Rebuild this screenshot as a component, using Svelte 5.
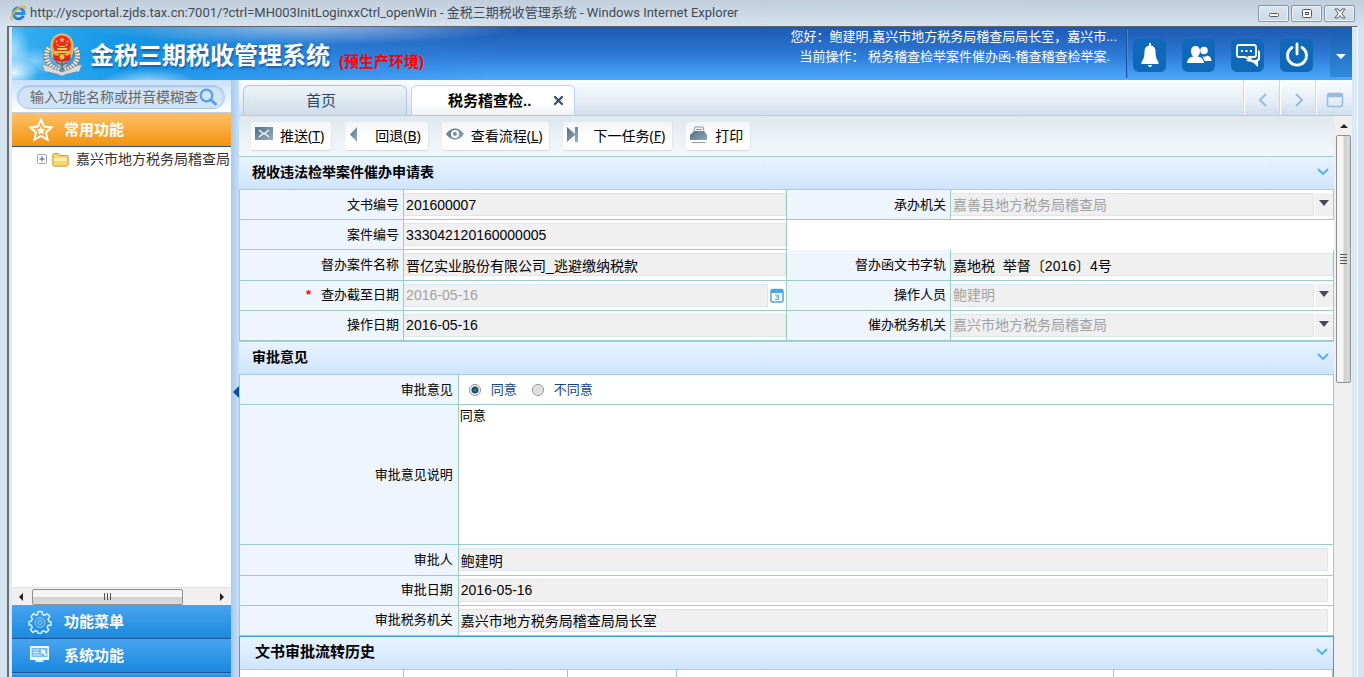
<script lang="ts">
  interface Tool {
    icon: string;
    label: string;
    key?: string;
  }

  const tools: Tool[] = [
    { icon: 'mail', label: '推送', key: 'T' },
    { icon: 'back', label: '回退', key: 'B' },
    { icon: 'eye', label: '查看流程', key: 'L' },
    { icon: 'next', label: '下一任务', key: 'F' },
    { icon: 'print', label: '打印' }
  ];

  const quickLinks = ['消息提醒', '联系人', '在线交流', '退出'];

  let keyword = $state('输入功能名称或拼音模糊查询');
  let opinion = $state('agree');
  let remark = $state('同意');
</script>

{#snippet chevron()}
  <svg width="12" height="8" viewBox="0 0 12 8" fill="none" stroke="#4fb0f2" stroke-width="1.800" aria-hidden="true">
    <path d="M1 1l5 5 5-5" />
  </svg>
{/snippet}

{#snippet heading(text: string)}
  <header class="section-head">
    <h2>{text}</h2>
    <button type="button" aria-label="折叠 {text}">{@render chevron()}</button>
  </header>
{/snippet}

{#snippet picker(id: string, value: string)}
  <div class="picker">
    <select {id} disabled><option>{value}</option></select>
    <span class="arrow"></span>
  </div>
{/snippet}

<div class="window">
  <div class="titlebar">
    <svg width="17" height="17" viewBox="0 0 17 17" fill="none" aria-hidden="true">
      <path d="M13.4 10.8a5.4 5.4 0 1 1 .6-2.4H5" stroke="#2b8fdc" stroke-width="3" />
      <path d="M13 11a5 5 0 0 1-8.500 1.500" stroke="#1567b5" stroke-width="1" />
      <path d="M2.500 15.500C-.5 14 3 6.500 8.500 3.200c4-2.400 7.300-2.300 6.800.8" stroke="#f0b429" stroke-width="1.600" />
    </svg>
    <span class="caption">http://yscportal.zjds.tax.cn:7001/?ctrl=MH003InitLoginxxCtrl_openWin - 金税三期税收管理系统 - Windows Internet Explorer</span>
    <div class="window-buttons">
      <button type="button" aria-label="最小化">
        <svg width="12" height="11" viewBox="0 0 12 11"><rect x="1.500" y="5.500" width="9" height="3" rx="1" fill="#fff" stroke="#4d5866" /></svg>
      </button>
      <button type="button" aria-label="最大化">
        <svg width="12" height="11" viewBox="0 0 12 11" fill="#fff" stroke="#4d5866"><rect x="1.500" y="1.500" width="9" height="8" rx="1" /><rect x="4.500" y="4.500" width="3" height="2" /></svg>
      </button>
      <button type="button" aria-label="关闭">
        <svg width="12" height="11" viewBox="0 0 12 11"><path d="M1 1h3l2 2.500L8 1h3L7.800 5.500 11 10H8L6 7.500 4 10H1l3.200-4.500z" fill="#fff" stroke="#4d5866" /></svg>
      </button>
    </div>
  </div>

  <div class="page">
    <header class="banner">
      <svg class="emblem" width="42" height="44" viewBox="0 0 42 44" aria-hidden="true">
        <g fill="none" stroke="#66737c" stroke-width="6">
          <path d="M8 15c-6 8-1 19 11 23" />
          <path d="M34 15c6 8 1 19-11 23" />
        </g>
        <g fill="none" stroke="#e6e4dc" stroke-width="5" stroke-dasharray="2 1">
          <path d="M8 15c-6 8-1 19 11 23" />
          <path d="M34 15c6 8 1 19-11 23" />
        </g>
        <path d="M14 25l3 10h8l3-10z" fill="#a9afb0" />
        <path d="M21 27v9M15 29l6 3 6-3" stroke="#5f696e" stroke-width="1.500" fill="none" />
        <path d="M1 32c6-1 9 4 15 5l5 2 5-2c6-1 9-6 15-5l-3 7c-4-1-8 2-12 2l-5 2-5-2c-4 0-8-3-12-2z" fill="#dcdad4" stroke="#7d868a" stroke-width=".6" />
        <path d="M10 13c0-8 5-12 11-12s11 4 11 12c0 4-1 8-2 11-5 3-13 3-18 0-1-3-2-7-2-11z" fill="#e8a93c" stroke="#f0c987" />
        <ellipse cx="21" cy="12" rx="9" ry="9.500" fill="#ea2b26" />
        <path d="M14 18h14l1 2H13zM16 15h10v2H16zM18 13h6v1h-6z" fill="#f7cf4a" />
        <path d="M21 4l.8 1.900h2.100l-1.700 1.300.6 2.100-1.800-1.200-1.800 1.200.6-2.100-1.700-1.300h2.100z" fill="#fbd94c" />
        <g fill="#fbd94c"><circle cx="15.500" cy="8.500" r=".9" /><circle cx="26.500" cy="8.500" r=".9" /><circle cx="16.500" cy="12" r=".9" /><circle cx="25.500" cy="12" r=".9" /></g>
        <path d="M12 21c3 2 5 2 6 1h6c1 1 3 1 6-1l-1 6c-4 2-12 2-16 0z" fill="#e0251f" />
        <circle cx="21" cy="24" r="2.500" fill="#f2c23c" />
      </svg>
      <h1>金税三期税收管理系统</h1>
      <strong class="env">(预生产环境)</strong>
      <div class="user">
        <p>您好：鲍建明,嘉兴市地方税务局稽查局局长室，嘉兴市...</p>
        <p class="current">当前操作： 税务稽查检举案件催办函-稽查稽查检举案.</p>
      </div>
      <nav class="quick" aria-label="快捷操作">
        {#each quickLinks as name, i}
          <button type="button" aria-label={name}>
            <svg width="26" height="26" viewBox="0 0 26 26" fill="#fff" aria-hidden="true">
              {#if i === 0}
                <path d="M12 1h2v2.500c3 .6 4.500 2.800 4.500 6 0 5 1 8 3 10.500v2h-17v-2c2-2.500 3-5.500 3-10.500 0-3.200 1.500-5.400 4.500-6zM11 23h4c0 2.500-4 2.500-4 0z" />
              {:else if i === 1}
                <circle cx="18" cy="8.500" r="3.800" />
                <path d="M15 14c1 1 5 1 6.500-.5 2.500.8 4 2.500 4 5.500h-7c-.5-2.500-1.500-4-3.500-5z" />
                <path d="M9.500 4c3 0 4.500 2 4.500 5s-1.300 5-2.500 5.500c4 .8 6 2.500 6.500 6.500H1c.3-4 2.500-5.700 6.500-6.500C6.200 14 5 12 5 9s1.500-5 4.500-5z" />
              {:else if i === 2}
                <path d="M4 3h15q2 0 2 2v8q0 2-2 2h-5l4 5-8-5H4q-2 0-2-2V5q0-2 2-2z" fill="none" stroke="#fff" stroke-width="1.800" />
                <path d="M6 8h2v2H6zM10.500 8h2v2h-2zM15 8h2v2h-2z" />
                <path d="M23 8c1.500.5 2 1.200 2 2.500v6c0 1.500-.8 2.300-2 2.500v6l-6-5.500h-4l-2-1.500h9q3 0 3-3z" />
              {:else}
                <path d="M8 5.500a9.500 9.500 0 1 0 10 0" fill="none" stroke="#fff" stroke-width="2.800" stroke-linecap="round" />
                <path d="M13 2v10" stroke="#fff" stroke-width="2.800" stroke-linecap="round" />
              {/if}
            </svg>
          </button>
        {/each}
      </nav>
      <button type="button" class="more" aria-label="更多"><span></span></button>
    </header>

    <div class="body">
      <aside>
        <form class="search" role="search">
          <div class="search-box">
            <input type="text" bind:value={keyword} aria-label="搜索功能" />
            <button type="button" aria-label="搜索">
              <svg width="18" height="18" viewBox="0 0 18 18" fill="none" stroke="#5a9fe2" aria-hidden="true">
                <circle cx="7.500" cy="7.500" r="5.800" stroke-width="2.200" />
                <path d="M12 12l4.500 4" stroke-width="3" stroke-linecap="round" />
              </svg>
            </button>
          </div>
        </form>
        <button type="button" class="menu favourite">
          <svg width="24" height="24" viewBox="0 0 24 24" aria-hidden="true">
            <path d="M12 1.500l3.100 7 7.500.8-5.600 5.100 1.600 7.400L12 18l-6.600 3.800L7 14.400 1.400 9.300l7.500-.8z" fill="none" stroke="#fff" stroke-width="2" />
            <path d="M12 8l1.400 3 3.100.3-2.300 2.100.7 3.200-2.900-1.700-2.900 1.700.7-3.200-2.300-2.100 3.100-.3z" fill="#fff" />
          </svg>
          常用功能
        </button>
        <div class="tree">
          <button type="button" class="expand" aria-label="展开">
            <svg width="10" height="10" viewBox="0 0 10 10" fill="none"><rect x=".5" y=".5" width="9" height="9" rx="1" fill="#fff" stroke="#9da3ab" /><path d="M2.500 5h5M5 2.500v5" stroke="#34569c" /></svg>
          </button>
          <svg class="folder" width="17" height="15" viewBox="0 0 17 15" aria-hidden="true">
            <path d="M.8 12.500V3q0-1.500 1.500-1.500h4l1.500 2h7q1.400 0 1.400 1.500v7.500q0 1.700-1.500 1.700H2.300Q.8 14.200.8 12.500z" fill="#f6d868" stroke="#c29b38" />
            <path d="M2 6h13v3H2z" fill="#fdf0ae" />
          </svg>
          <a href="#tree">嘉兴市地方税务局稽查局</a>
        </div>
        <div class="hscroll" aria-hidden="true">
          <i class="left"></i>
          <div class="thumb"><b></b><b></b><b></b></div>
          <i class="right"></i>
        </div>
        <button type="button" class="menu">
          <svg width="24" height="24" viewBox="0 0 24 24" fill="none" stroke="#dff0ff" aria-hidden="true">
            <path d="M10 1.500h4l.6 3 2 .8 2.600-1.700 2.600 2.800L20 9l.8 2 .2.300 2 .7v3l-3 .5-.8 2 1.600 2.500-2.500 2.500-2.600-1.600-2 .8-.5 1.800h-3l-.7-2-2-.8-2.600 1.700-2.400-2.600 1.700-2.500-.8-2-2.400-.5v-3l2.500-.8.8-2L3.200 6.300l2.600-2.700 2.500 1.700 1.200-.8z" stroke-width="1.500" />
            <circle cx="12" cy="12.500" r="4.800" stroke="#9fd0f7" />
            <circle cx="12" cy="12.500" r="2" stroke="#9fd0f7" />
          </svg>
          功能菜单
        </button>
        <button type="button" class="menu">
          <svg width="24" height="24" viewBox="0 0 24 24" aria-hidden="true">
            <path d="M2 2h19v14H2z" fill="#eef8ff" />
            <path d="M3.500 4h16v9h-16z" fill="#77bdf2" />
            <path d="M5 6h6M5 8.500h6M5 11h8" stroke="#dff0ff" />
            <path d="M13 5l5 2-1.500 1 2.500 3-1.500 1-2.500-3-1.500 1z" fill="#fff" />
            <path d="M8 16h7l1 2H7z" fill="#d2e9fb" />
          </svg>
          系统功能
        </button>
        <div class="menu rest"></div>
      </aside>

      <button type="button" class="splitter" aria-label="收起侧栏"><span></span></button>

      <main>
        <div class="tabs">
          <button type="button" class="tab">首页</button>
          <div class="tab active">
            <span>税务稽查检..</span>
            <button type="button" aria-label="关闭标签">
              <svg width="11" height="11" viewBox="0 0 11 11" stroke="#3e4f70" stroke-width="2.400" stroke-linecap="round"><path d="M2 2l7 7M9 2l-7 7" /></svg>
            </button>
          </div>
          <div class="tab-nav">
            <button type="button" aria-label="上一个标签"><svg width="18" height="18" viewBox="0 0 18 18"><path d="M12 3L6 9l6 6" /></svg></button>
            <button type="button" aria-label="下一个标签"><svg width="18" height="18" viewBox="0 0 18 18"><path d="M6 3l6 6-6 6" /></svg></button>
            <button type="button" aria-label="最大化标签"><svg width="18" height="18" viewBox="0 0 18 18"><rect x="1.500" y="2.500" width="15" height="13" rx="2" stroke-width="1.500" /><path d="M2 4.500h14" stroke-width="3.500" /></svg></button>
          </div>
        </div>

        <div class="work">
          <div class="content">
            <div class="toolbar">
              {#each tools as tool}
                <button type="button" class={tool.icon}>
                  <svg width="18" height="18" viewBox="0 0 18 18" aria-hidden="true">
                    <defs>
                      <linearGradient id="steel-{tool.icon}" x1="0" y1="0" x2="1" y2="1">
                        <stop offset="0" stop-color="#566f82" />
                        <stop offset="1" stop-color="#93b0c2" />
                      </linearGradient>
                    </defs>
                    <g fill="url(#steel-{tool.icon})">
                      {#if tool.icon === 'mail'}
                        <path d="M0 1h18v13H0z" />
                        <path d="M4 4l5 4 5-4M4 11l3.500-3M14 11l-3.500-3" fill="none" stroke="#f2f6f8" stroke-width="1.500" />
                      {:else if tool.icon === 'back'}
                        <path d="M8 1v15L1 8.500z" />
                      {:else if tool.icon === 'eye'}
                        <path d="M0 8C5 .5 13 .5 18 8 13 15.500 5 15.500 0 8z" />
                        <circle cx="9" cy="8" r="4" fill="#fff" />
                        <circle cx="9" cy="8" r="2" />
                      {:else if tool.icon === 'next'}
                        <path d="M0 1l8 7V1h3v15H8V9l-8 7z" />
                      {:else}
                        <path d="M4 5l1-4h8l1 4M6 3.500h6" fill="none" stroke="#7f99aa" />
                        <path d="M4 5h10l3 4v5H0V9zM2 16h14v1H2z" />
                      {/if}
                    </g>
                  </svg>
                  <span>{tool.label}{#if tool.key}(<u>{tool.key}</u>){/if}</span>
                </button>
              {/each}
            </div>

            <section>
              {@render heading('税收违法检举案件催办申请表')}
              <table class="apply">
                <colgroup><col class="c15" /><col class="c35" /><col class="c15" /><col class="c35" /></colgroup>
                <tbody>
                  <tr>
                    <th><label for="doc-no">文书编号</label></th>
                    <td><input id="doc-no" type="text" value="201600007" readonly /></td>
                    <th><label for="handler">承办机关</label></th>
                    <td>{@render picker('handler', '嘉善县地方税务局稽查局')}</td>
                  </tr>
                  <tr>
                    <th><label for="case-no">案件编号</label></th>
                    <td><input id="case-no" type="text" value="333042120160000005" readonly /></td>
                    <td class="blank" colspan="2"></td>
                  </tr>
                  <tr>
                    <th><label for="case-name">督办案件名称</label></th>
                    <td><input id="case-name" type="text" value="晋亿实业股份有限公司_逃避缴纳税款" readonly /></td>
                    <th><label for="doc-word">督办函文书字轨</label></th>
                    <td><input id="doc-word" type="text" value="嘉地税  举督〔2016〕4号" readonly /></td>
                  </tr>
                  <tr>
                    <th><span class="required">*</span><label for="deadline">查办截至日期</label></th>
                    <td>
                      <div class="date">
                        <input id="deadline" type="text" value="2016-05-16" disabled />
                        <button type="button" aria-label="选择日期">
                          <svg width="14" height="15" viewBox="0 0 14 15" fill="none" stroke="#4ba6e8"><rect x="1" y="1.500" width="12" height="12.500" rx="1.500" stroke-width="1.500" fill="#fff" /><path d="M1 3.500h12" stroke-width="3" /><path d="M5 7h3.500v4.500H5M6 9h2.500" /></svg>
                        </button>
                      </div>
                    </td>
                    <th><label for="operator">操作人员</label></th>
                    <td>{@render picker('operator', '鲍建明')}</td>
                  </tr>
                  <tr>
                    <th><label for="op-date">操作日期</label></th>
                    <td><input id="op-date" type="text" value="2016-05-16" readonly /></td>
                    <th><label for="urge-org">催办税务机关</label></th>
                    <td>{@render picker('urge-org', '嘉兴市地方税务局稽查局')}</td>
                  </tr>
                </tbody>
              </table>
            </section>

            <section>
              {@render heading('审批意见')}
              <table class="approve">
                <colgroup><col class="c20" /><col /></colgroup>
                <tbody>
                  <tr>
                    <th>审批意见</th>
                    <td>
                      <div class="radios">
                        <input id="agree" type="radio" name="opinion" value="agree" bind:group={opinion} />
                        <label for="agree">同意</label>
                        <input id="disagree" type="radio" name="opinion" value="disagree" bind:group={opinion} />
                        <label for="disagree">不同意</label>
                      </div>
                    </td>
                  </tr>
                  <tr>
                    <th><label for="remark">审批意见说明</label></th>
                    <td><textarea id="remark" bind:value={remark}></textarea></td>
                  </tr>
                  <tr>
                    <th><label for="approver">审批人</label></th>
                    <td class="inset"><input id="approver" type="text" value="鲍建明" readonly /></td>
                  </tr>
                  <tr>
                    <th><label for="approve-date">审批日期</label></th>
                    <td class="inset"><input id="approve-date" type="text" value="2016-05-16" readonly /></td>
                  </tr>
                  <tr>
                    <th><label for="approve-org">审批税务机关</label></th>
                    <td class="inset"><input id="approve-org" type="text" value="嘉兴市地方税务局稽查局局长室" readonly /></td>
                  </tr>
                </tbody>
              </table>
            </section>

            <section class="history">
              {@render heading('文书审批流转历史')}
              <table>
                <colgroup><col class="c15" /><col class="c15" /><col class="c10" /><col class="c40" /><col /></colgroup>
                <tbody><tr><td></td><td></td><td></td><td></td><td></td></tr></tbody>
              </table>
            </section>
          </div>

          <div class="vscroll" aria-hidden="true">
            <i></i>
            <div class="thumb"><b></b><b></b><b></b><b></b></div>
          </div>
        </div>
      </main>
    </div>
  </div>
</div>

<style>
  :global(body) {
    margin: 0;
    background: #d6e3f1;
  }

  .window,
  .window * {
    box-sizing: border-box;
  }

  .window {
    display: flex;
    flex-direction: column;
    height: 100vh;
    overflow: hidden;
    background: #d6e3f1;
    color: #000;
    font: 13px/20px 'Liberation Sans', 'Noto Sans CJK SC', sans-serif;
  }

  button,
  input,
  select,
  textarea {
    margin: 0;
    padding: 0;
    border: 0;
    background: none;
    color: inherit;
    font: inherit;
  }

  button {
    cursor: pointer;
  }

  svg {
    display: block;
    flex: none;
  }

  h1,
  h2,
  p {
    margin: 0;
  }

  /* window frame */
  .titlebar {
    display: flex;
    flex: none;
    align-items: center;
    gap: 3px;
    height: 26px;
    padding: 0 9px 0 10px;
    background: linear-gradient(#c0cedb, #d6e2ee);
    color: #3f4a55;
    font: 13px/20px Roboto, 'Noto Sans CJK SC', sans-serif;
  }

  .caption {
    flex: 1;
    min-width: 0;
    overflow: hidden;
    white-space: nowrap;
  }

  .window-buttons {
    display: flex;
    gap: 2px;
  }

  .window-buttons button {
    display: flex;
    align-items: center;
    justify-content: center;
    width: 31px;
    height: 17px;
    border: 1px solid #8494a5;
    border-radius: 2px;
    background: linear-gradient(#dbe5ef, #cbd8e5);
    box-shadow: inset 0 0 0 1px #eaf1f7;
  }

  .page {
    display: flex;
    flex: 1;
    flex-direction: column;
    min-height: 0;
    margin: 0 6px 0 7px;
    padding: 0 5px 0 3px;
    border-top: 1px solid #5f656b;
    border-left: 2px solid #6d6d6d;
    border-right: 1px solid #fff;
    background: #dceaf8;
  }

  /* banner */
  .banner {
    display: flex;
    flex: none;
    align-items: center;
    height: 53px;
    padding-left: 29px;
    background:
      radial-gradient(ellipse 24px 14px at 2px 46px, rgba(255, 255, 255, 0.9), transparent),
      radial-gradient(ellipse 30px 14px at 22px 34px, rgba(255, 255, 255, 0.4), transparent),
      radial-gradient(ellipse 18px 26px at 0 22px, rgba(255, 255, 255, 0.6), transparent),
      radial-gradient(ellipse 50px 14px at 136px 56px, rgba(255, 255, 255, 0.6), transparent),
      radial-gradient(ellipse 220px 18px at 290px 0, rgba(190, 210, 240, 0.7), transparent),
      linear-gradient(90deg, #35b0f2 0, rgba(18, 154, 234, 0.9) 110px, rgba(45, 130, 225, 0.3) 360px, transparent 480px),
      linear-gradient(#1d59b2, #2c78d2 50%, #4aa8fe);
    color: #fff;
  }

  .emblem {
    margin: 3px 7px 0 0;
  }

  h1 {
    flex: none;
    padding-top: 5px;
    font-size: 24px;
    line-height: 32px;
    text-shadow: 1px 2px 2px rgba(20, 60, 120, 0.6);
  }

  .env {
    flex: none;
    padding: 17px 0 0 9px;
    color: #f00;
    font-size: 15px;
  }

  .user {
    flex: 1;
    min-width: 0;
    margin-right: 9px;
    padding-bottom: 13px;
    text-align: right;
    white-space: nowrap;
  }

  .current {
    padding-right: 7px;
  }

  .quick {
    display: flex;
    gap: 16px;
    height: 48px;
    padding: 9px 17px 0 6px;
    border-left: 1px solid #15519f;
    box-shadow: inset 1px 0 #3a8fde;
  }

  .quick button {
    display: flex;
    align-items: center;
    justify-content: center;
    width: 33px;
    height: 33px;
    border-radius: 6px;
    background: #1068b8;
  }

  .more {
    display: flex;
    align-items: center;
    align-self: flex-start;
    justify-content: center;
    width: 22px;
    height: 50px;
    padding-top: 8px;
    background: linear-gradient(#1a5cb0, #2f8ade);
  }

  .more span {
    border: 5px solid transparent;
    border-top-color: #fff;
    border-bottom: 0;
  }

  .body {
    display: flex;
    flex: 1;
    min-height: 0;
  }

  /* sidebar */
  aside {
    display: flex;
    flex: none;
    flex-direction: column;
    width: 219px;
    background: #fff;
  }

  .search {
    flex: none;
    height: 33px;
    padding: 5px 6px 0 5px;
    border-bottom: 1px solid #c6cdd6;
    background: linear-gradient(#c8e1fb, #fff);
  }

  .search-box {
    display: flex;
    align-items: center;
    height: 24px;
    padding: 0 7px 0 12px;
    border: 1px solid #a5c8ee;
    border-radius: 12px;
    background: #d0e4f8;
    box-shadow: inset 0 1px 2px #9cc0e8;
  }

  .search-box input {
    flex: 1;
    min-width: 0;
    color: #666;
    font-size: 14px;
  }

  .menu {
    display: flex;
    flex: none;
    align-items: center;
    gap: 12px;
    height: 34px;
    padding: 0 16px;
    border-bottom: 1px solid #1c559c;
    background: linear-gradient(#48a4f0, #1a8ade);
    color: #fff;
    font-size: 15px;
    font-weight: bold;
  }

  .menu.favourite {
    padding-left: 17px;
    gap: 11px;
    background: linear-gradient(#ffc069, #f3940e);
  }

  .menu.rest {
    height: 4px;
    border: 0;
  }

  .tree {
    display: flex;
    flex: 1;
    align-items: flex-start;
    min-height: 0;
    padding-left: 25px;
    overflow: hidden;
  }

  .expand {
    margin-top: 7px;
  }

  .folder {
    margin: 5px 7px 0 5px;
  }

  .tree a {
    padding-top: 2px;
    color: #333;
    font-size: 14px;
    text-decoration: none;
    white-space: nowrap;
  }

  .hscroll {
    display: flex;
    flex: none;
    align-items: center;
    height: 18px;
    padding: 0 7px;
    border-top: 1px solid #e2e2e2;
    background: #f0f0f0;
  }

  .hscroll .left {
    border: 4px solid transparent;
    border-right-color: #222;
    border-left: 0;
  }

  .hscroll .right {
    margin-left: auto;
    border: 4px solid transparent;
    border-left-color: #222;
    border-right: 0;
  }

  .thumb {
    display: flex;
    align-items: center;
    justify-content: center;
    gap: 2px;
    border: 1px solid #8f8f8f;
    border-radius: 2px;
  }

  .hscroll .thumb {
    width: 151px;
    height: 16px;
    margin-left: 9px;
    background: linear-gradient(#f5f5f5 50%, #cfd0d2 50%, #dadbdd);
  }

  .hscroll .thumb b {
    width: 1px;
    height: 7px;
    background: #555;
  }

  .splitter {
    display: flex;
    flex: none;
    align-items: center;
    justify-content: flex-end;
    width: 8px;
    padding: 26px 0 0;
    background: linear-gradient(90deg, #a9c9ea, #c4e0f9);
  }

  .splitter span {
    border: 6px solid transparent;
    border-right-color: #0d4f97;
    border-left: 0;
  }

  /* tabs */
  main {
    display: flex;
    flex: 1;
    flex-direction: column;
    min-width: 0;
    background: #fff;
  }

  .tabs {
    display: flex;
    flex: none;
    align-items: flex-end;
    gap: 4px;
    height: 36px;
    padding-left: 4px;
    border-bottom: 1px solid #a9cdf0;
    background: linear-gradient(#fafdff, #e6edf5 60%, #cfdeec);
  }

  .tab {
    width: 164px;
    height: 30px;
    border: 1px solid #b0c5da;
    border-bottom: 0;
    border-radius: 6px 6px 0 0;
    background: linear-gradient(#eef3f8, #cfdce8);
    color: #2c4468;
    font-size: 15px;
  }

  .tab:not(.active) {
    padding-right: 8px;
  }

  .tab.active {
    display: flex;
    align-items: center;
    justify-content: space-between;
    padding: 0 10px 0 36px;
    border-color: #bcd5f2;
    background: linear-gradient(#fff 60%, #eef2f4);
    color: #000;
    font-weight: bold;
    white-space: nowrap;
  }

  .tab-nav {
    display: flex;
    align-self: stretch;
    margin-left: auto;
  }

  .tab-nav button {
    display: flex;
    align-items: center;
    justify-content: center;
    width: 36px;
    padding-top: 4px;
    border-left: 1px solid #fff;
    box-shadow: -1px 0 #c5d6e6;
  }

  .tab-nav svg {
    fill: none;
    stroke: #96bbdd;
    stroke-width: 2;
  }

  .work {
    display: flex;
    flex: 1;
    min-height: 0;
  }

  .content {
    flex: 1;
    min-width: 0;
    overflow: hidden;
  }

  .toolbar {
    display: flex;
    align-items: center;
    gap: 14px;
    height: 40px;
    padding-left: 12px;
    background: linear-gradient(#dfe8ef, #f5f8fa);
  }

  .toolbar button {
    display: flex;
    align-items: center;
    gap: 7px;
    height: 28px;
    padding: 0 7px 0 4px;
    border-radius: 3px;
    background: linear-gradient(#f1f5f8, #fff 60%);
    box-shadow: 0 1px 1px #d2d7db, 1px 0 1px #e3e7ea;
    font: 14px/20px 'Noto Sans', 'Noto Sans CJK SC', sans-serif;
    white-space: nowrap;
  }

  .toolbar svg {
    margin-bottom: 2px;
  }

  .toolbar .back,
  .toolbar .next {
    gap: 8px;
  }

  /* sections */
  .section-head {
    display: flex;
    align-items: center;
    justify-content: space-between;
    height: 34px;
    padding: 0 5px 3px 13px;
    border: solid #a5cbe8;
    border-width: 1px 0;
    background: linear-gradient(#e7f3ff, #cfe5fd);
  }

  h2 {
    font-size: 14px;
    line-height: 20px;
  }

  table {
    width: 100%;
    border-left: 1px solid #9fc8dc;
    border-spacing: 0;
    table-layout: fixed;
  }

  .c10 {
    width: 10%;
  }

  .c15 {
    width: 15%;
  }

  .c20 {
    width: 20%;
  }

  .c35 {
    width: 35%;
  }

  .c40 {
    width: 40%;
  }

  th,
  td {
    height: 30px;
    padding: 0;
    border: solid #9ccac4;
    border-width: 0 1px 1px 0;
  }

  th {
    padding-right: 4px;
    background: #eef5fd;
    font-weight: normal;
    text-align: right;
    white-space: nowrap;
  }

  .approve th {
    padding-right: 5px;
  }

  .apply {
    height: 151px;
  }

  .approve {
    height: 261px;
  }

  td.blank {
    border: 0;
  }

  .required {
    margin-right: 10px;
    color: #f00;
    font-weight: bold;
    line-height: 16px;
  }

  td input[type='text'],
  select {
    display: block;
    width: 100%;
    height: 23px;
    padding: 0 0 0 2px;
    border: 1px solid #d8e8f3;
    border-left: 0;
    background: #f0f0f0;
    font-size: 14px;
    white-space: pre;
  }

  td input:disabled,
  select:disabled {
    color: #a0a0a0;
    opacity: 1;
  }

  select {
    flex: 1;
    appearance: none;
  }

  .picker {
    display: flex;
  }

  .arrow {
    display: flex;
    flex: none;
    justify-content: center;
    width: 19px;
    padding-top: 7px;
    border-left: 1px solid #fff;
    background: #f0f0f0;
  }

  .arrow::before {
    content: '';
    height: 6px;
    border: 5px solid transparent;
    border-top: 6px solid #414b5c;
    border-bottom: 0;
  }

  .date {
    display: flex;
    align-items: center;
    gap: 2px;
    padding-right: 2px;
  }

  .radios {
    display: flex;
    align-items: center;
    padding-left: 10px;
    color: #15428b;
  }

  .radios input {
    width: 12px;
    height: 12px;
    border: 1px solid #8e8f8f;
    border-radius: 50%;
    background: radial-gradient(#dcdcdc 40%, #fff);
    appearance: none;
  }

  .radios input:checked {
    background: radial-gradient(#2f8fb8 0, #123f5c 3px, #f4f4f4 4px);
  }

  .radios label {
    padding: 0 15px 0 10px;
  }

  textarea {
    display: block;
    width: 100%;
    height: 138px;
    padding: 0 1px;
    line-height: 19px;
    resize: none;
  }

  td.inset {
    padding-right: 5px;
  }

  .history {
    border: solid #3f9be0;
    border-width: 1px 1px 0;
  }

  .history .section-head {
    height: 33px;
    padding-left: 15px;
    border-top: 0;
  }

  .history h2 {
    font-size: 15px;
  }

  .history table {
    border-left: 0;
  }

  /* scrollbar */
  .vscroll {
    display: flex;
    flex: none;
    flex-direction: column;
    align-items: center;
    width: 18px;
    padding-left: 1px;
    background: #efefef;
  }

  .vscroll i {
    margin: 8px 0 7px;
    border: 4px solid transparent;
    border-top: 0;
    border-bottom-color: #222;
  }

  .vscroll .thumb {
    flex-direction: column;
    width: 15px;
    height: 248px;
    background: linear-gradient(90deg, #f5f5f5 45%, #cfd0d2 55%, #dadbdd);
  }

  .vscroll .thumb b {
    width: 7px;
    height: 1px;
    background: #555;
  }
</style>
